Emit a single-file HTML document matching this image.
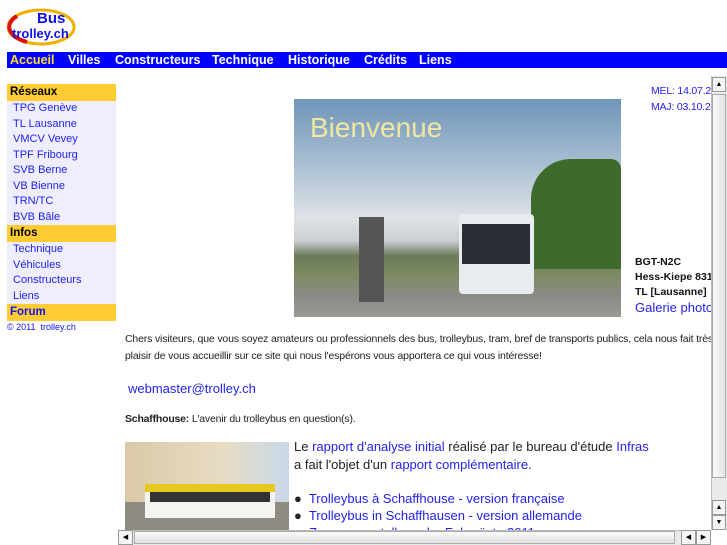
<!DOCTYPE html>
<html><head><meta charset="utf-8"><style>
*{margin:0;padding:0;box-sizing:border-box}
body{width:727px;height:545px;overflow:hidden;background:#fff;font-family:"Liberation Sans",sans-serif;position:relative}
.a{position:absolute;white-space:nowrap}
.nav{left:7px;top:52px;width:720px;height:16px;background:#0000ff}
.nav span{position:absolute;top:0;font-weight:bold;font-size:12.5px;color:#fff;line-height:16px}
.side{left:7px;top:84px;width:109px}
.h{background:#ffcc33;font-weight:bold;font-size:11.5px;height:17px;line-height:17px;padding-left:3px;color:#000}
.it{background:#eeeeff;font-size:11px;color:#2222ee;height:15.5px;line-height:15.5px;padding-left:6px}
.b{color:#2222ee}
.sm{font-size:10.5px;color:#222;letter-spacing:-0.2px}
</style></head><body>
<div class="a" style="left:7px;top:8px;width:69px;height:38px">
<svg width="69" height="38"><ellipse cx="34" cy="19" rx="33" ry="17" fill="#fff" stroke="#f0b000" stroke-width="3"/><path d="M10 8 A33 17 0 0 0 20 34" stroke="#e01010" stroke-width="4" fill="none"/></svg>
<div class="a" style="left:30px;top:2px;font-weight:bold;font-size:15px;color:#1010ee">Bus</div>
<div class="a" style="left:5px;top:18px;font-weight:bold;font-size:13px;color:#1010ee">trolley.ch</div>
</div>
<div class="a nav">
<span style="left:3px;color:#ffdd33">Accueil</span><span style="left:61px">Villes</span><span style="left:108px">Constructeurs</span><span style="left:205px">Technique</span><span style="left:281px">Historique</span><span style="left:357px">Crédits</span><span style="left:412px">Liens</span>
</div>
<div class="a side">
<div class="h">Réseaux</div>
<div class="it">TPG Genève</div><div class="it">TL Lausanne</div><div class="it">VMCV Vevey</div><div class="it">TPF Fribourg</div><div class="it">SVB Berne</div><div class="it">VB Bienne</div><div class="it">TRN/TC</div><div class="it">BVB Bâle</div>
<div class="h">Infos</div>
<div class="it">Technique</div><div class="it">Véhicules</div><div class="it">Constructeurs</div><div class="it">Liens</div>
<div class="h" style="color:#1010ee">Forum</div>
<div style="font-size:9px;color:#1010ee;padding-top:1px">© 2011 &nbsp;trolley.ch</div>
</div>
<div class="a" style="left:294px;top:99px;width:327px;height:218px;overflow:hidden;background:linear-gradient(#6f95b8 0%,#a9bfd2 30%,#dfe3e6 55%,#c9cfd2 65%,#6d7a5a 72%,#7c8a60 80%,#8a8a84 90%,#9a9a96 100%)">
<div class="a" style="right:0;top:60px;width:90px;height:110px;background:#3e6a2c;border-radius:40px 10px 0 0"></div>
<div class="a" style="left:65px;top:118px;width:25px;height:85px;background:#555"></div>
<div class="a" style="left:165px;top:115px;width:75px;height:80px;background:#e8ecf0;border-radius:4px"></div>
<div class="a" style="left:168px;top:125px;width:68px;height:40px;background:#2a2f36"></div>
<div class="a" style="left:16px;top:13px;font-size:28px;color:#f0e6a0">Bienvenue</div>
</div>
<div class="a" style="left:651px;top:83px;font-size:10.5px;color:#2222ee;line-height:16px;width:60px;overflow:hidden;letter-spacing:-0.2px">MEL: 14.07.20<br>MAJ: 03.10.20</div>
<div class="a" style="left:635px;top:255px;font-size:10.5px;font-weight:bold;line-height:15px;color:#111;width:76px;overflow:hidden">BGT-N2C<br>Hess-Kiepe 831<br>TL [Lausanne]</div>
<div class="a b" style="left:635px;top:300px;font-size:13px;width:76px;overflow:hidden">Galerie photo</div>
<div class="a sm" style="left:125px;top:331px;line-height:17px;letter-spacing:-0.16px">Chers visiteurs, que vous soyez amateurs ou professionnels des bus, trolleybus, tram, bref de transports publics, cela nous fait très<br>plaisir de vous accueillir sur ce site qui nous l'espérons vous apportera ce qui vous intéresse!</div>
<div class="a b" style="left:128px;top:381px;font-size:13px">webmaster@trolley.ch</div>
<div class="a sm" style="left:125px;top:413px"><b>Schaffhouse:</b> L'avenir du trolleybus en question(s).</div>
<div class="a" style="left:125px;top:442px;width:164px;height:88px;overflow:hidden;background:linear-gradient(90deg,#d9c9a8,#e8dcc4 60%,#c8d8e8)">
<div class="a" style="left:0;top:60px;width:164px;height:28px;background:#8f8c84"></div>
<div class="a" style="left:20px;top:42px;width:130px;height:34px;background:#f4f4f0;border-top:8px solid #e8c820"></div>
<div class="a" style="left:25px;top:50px;width:120px;height:10px;background:#333"></div>
</div>
<div class="a" style="left:294px;top:438px;font-size:13px;line-height:18px;color:#222">Le <span class="b">rapport d'analyse initial</span> réalisé par le bureau d'étude <span class="b">Infras</span><br>a fait l'objet d'un <span class="b">rapport complémentaire</span>.</div>
<div class="a" style="left:294px;top:490px;font-size:13px;line-height:17px;color:#222">●&nbsp; <span class="b">Trolleybus à Schaffhouse - version française</span><br>●&nbsp; <span class="b">Trolleybus in Schaffhausen - version allemande</span><br>●&nbsp; <span class="b">Zusammenstellung der Fahrgäste 2011</span></div>
<div class="a" style="left:711px;top:76px;width:16px;height:454px;background:#eaeaea;border-left:1px solid #bbb"></div>
<div class="a" style="left:712px;top:77px;width:14px;height:15px;background:#f4f4f4;border:1px solid #999;font-size:7px;text-align:center;line-height:13px">▲</div>
<div class="a" style="left:712px;top:94px;width:14px;height:384px;background:linear-gradient(90deg,#fafafa,#e4e4e4);border:1px solid #aaa"></div>
<div class="a" style="left:712px;top:500px;width:14px;height:15px;background:#f4f4f4;border:1px solid #999;font-size:7px;text-align:center;line-height:13px">▲</div>
<div class="a" style="left:712px;top:515px;width:14px;height:15px;background:#f4f4f4;border:1px solid #999;font-size:7px;text-align:center;line-height:13px">▼</div>
<div class="a" style="left:118px;top:530px;width:593px;height:15px;background:#eaeaea;border-top:1px solid #bbb"></div>
<div class="a" style="left:118px;top:530px;width:15px;height:15px;background:#f4f4f4;border:1px solid #999;font-size:7px;text-align:center;line-height:13px">◀</div>
<div class="a" style="left:134px;top:531px;width:541px;height:13px;background:linear-gradient(#fafafa,#e0e0e0);border:1px solid #aaa"></div>
<div class="a" style="left:681px;top:530px;width:15px;height:15px;background:#f4f4f4;border:1px solid #999;font-size:7px;text-align:center;line-height:13px">◀</div>
<div class="a" style="left:696px;top:530px;width:15px;height:15px;background:#f4f4f4;border:1px solid #999;font-size:7px;text-align:center;line-height:13px">▶</div>
</body></html>
